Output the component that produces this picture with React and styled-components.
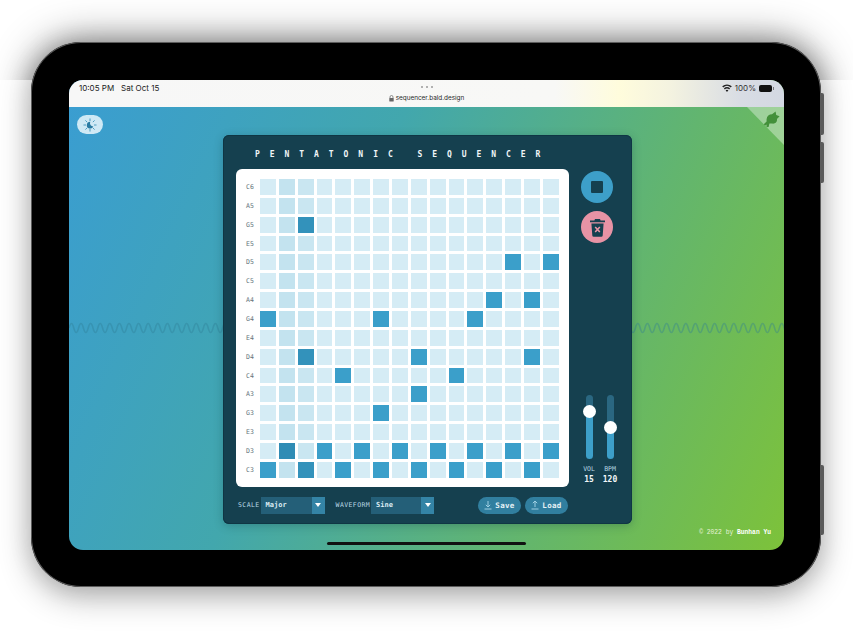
import React from "react";
import styled, { createGlobalStyle } from "styled-components";

const NOTES = ["C6", "A5", "G5", "E5", "D5", "C5", "A4", "G4", "E4", "D4", "C4", "A3", "G3", "E3", "D3", "C3"];

const ACTIVE = {
  G5: [2],
  D5: [13, 15],
  A4: [12, 14],
  G4: [0, 6, 11],
  D4: [2, 8, 14],
  C4: [4, 10],
  A3: [8],
  G3: [6],
  D3: [1, 3, 5, 7, 9, 11, 13, 15],
  C3: [0, 2, 4, 6, 8, 10, 12, 14],
};

const MONO = `"DejaVu Sans Mono", "Liberation Mono", monospace`;

const GlobalStyle = createGlobalStyle`
  html, body {
    margin: 0;
    padding: 0;
    background: #fff;
    overflow: hidden;
  }
`;

const Page = styled.div`
  width: 853px;
  height: 637px;
  padding: 42px 0 0 31px;
  box-sizing: border-box;
`;

const Device = styled.div`
  position: relative;
  width: 790px;
  height: 545px;
  box-sizing: border-box;
  padding: 38px 37px 37px 38px;
  background: #000;
  border-radius: 50px;
  box-shadow: inset 0 0 0 1px #5c5c5c, 0 10px 32px rgba(0, 0, 0, 0.3), 0 0 24px rgba(0, 0, 0, 0.12);

  &::before {
    content: "";
    position: absolute;
    inset: 0;
    border-radius: 50px;
    box-shadow: 0 -3px 40px rgba(0, 0, 0, 0.42);
    clip-path: inset(-60px -60px calc(100% - 38px) -60px);
    pointer-events: none;
  }
`;

const SideButton = styled.div`
  position: absolute;
  right: -3px;
  top: ${(p) => p.$top}px;
  width: 3px;
  height: ${(p) => p.$height}px;
  background: #5a5a5a;
  border-radius: 0 2px 2px 0;
`;

const Screen = styled.div`
  position: relative;
  height: 100%;
  display: flex;
  flex-direction: column;
  border-radius: 14px;
  overflow: hidden;
  background: linear-gradient(114deg, #3a9dd2 0%, #42a7ad 38%, #62b56f 70%, #7dc23a 100%);
`;

const StatusBar = styled.div`
  position: relative;
  flex: 0 0 27px;
  display: flex;
  align-items: flex-start;
  justify-content: space-between;
  box-sizing: border-box;
  padding: 1px 12px 0 10px;
  font: 400 8px/14px Inter, "Liberation Sans", sans-serif;
  color: #222;
  background: linear-gradient(90deg, #f7f7f7 0%, #f8f8f6 68%, #fffcdc 77%, #f4f3e0 84%, #d8dce4 94%, #d3d8e2 100%);
`;

const TimeText = styled.div`
  display: flex;
  gap: 7px;
`;

const AddressBar = styled.div`
  position: absolute;
  left: 0;
  right: 0;
  top: 6px;
  display: flex;
  flex-direction: column;
  align-items: center;
`;

const Dots = styled.div`
  display: flex;
  gap: 3px;
  height: 7px;

  i {
    width: 2px;
    height: 2px;
    border-radius: 50%;
    background: #9a9a9a;
  }
`;

const Url = styled.div`
  display: flex;
  align-items: center;
  gap: 2px;
  font-size: 6.4px;
  line-height: 10px;
  color: #2a2a2a;
`;

const StatusIcons = styled.div`
  display: flex;
  align-items: center;
  gap: 3px;
  color: #333;
`;

const Battery = styled.div`
  position: relative;
  width: 13px;
  height: 7px;
  border-radius: 2px;
  background: #111;

  &::after {
    content: "";
    position: absolute;
    left: 14px;
    top: 2px;
    width: 1px;
    height: 3px;
    background: #777;
  }
`;

const Main = styled.div`
  flex: 1;
  display: flex;
  justify-content: center;
  align-items: flex-start;
  padding: 28px 0 0 2px;
`;

const ThemeToggle = styled.button`
  position: absolute;
  left: 8px;
  top: 35px;
  width: 26px;
  height: 19px;
  padding: 0;
  display: flex;
  align-items: center;
  justify-content: center;
  border: 0;
  border-radius: 10px;
  background: #cfe9f5;
`;

const Corner = styled.a`
  position: absolute;
  right: 0;
  top: 27px;
  width: 37px;
  height: 38px;
  background: rgba(255, 255, 255, 0.36);
  clip-path: polygon(0 0, 100% 0, 100% 100%);
`;

const CornerCat = styled.svg`
  position: absolute;
  right: 3px;
  top: 3px;
`;

const WaveLine = styled.svg`
  position: absolute;
  left: 0;
  top: 242px;
`;

const Panel = styled.div`
  position: relative;
  width: 409px;
  height: 389px;
  box-sizing: border-box;
  padding: 0 7px 0 13px;
  background: #15404f;
  border-radius: 6px;
  box-shadow: inset 0 0 0 1px #0f3644, 0 2px 10px rgba(10, 50, 60, 0.28);
`;

const Title = styled.div`
  height: 34px;
  padding: 0 0 0 19px;
  font: 700 8px/39px ${MONO};
  letter-spacing: 9.95px;
  white-space: pre;
  color: #f1f6f8;
`;

const Body = styled.div`
  display: flex;
  height: 318px;
`;

const Board = styled.div`
  width: 333px;
  height: 318px;
  box-sizing: border-box;
  padding: 10px 10px 0 0;
  display: flex;
  background: #fff;
  border-radius: 6px;
`;

const Labels = styled.div`
  width: 24px;
  display: grid;
  grid-template-rows: repeat(16, 15.87px);
  row-gap: 3px;
`;

const NoteLabel = styled.div`
  padding-left: 10px;
  font: 400 6.5px/16px ${MONO};
  color: #66757c;
`;

const Grid = styled.div`
  display: grid;
  grid-template-columns: repeat(16, 15.87px);
  grid-template-rows: repeat(16, 15.87px);
  gap: 3px;
`;

const cellColor = ({ $on, $col }) => {
  if ($on) return $col === 1 ? "#2f8cb5" : $col === 2 ? "#3392bb" : "#3b9fca";
  return $col === 1 ? "#c3e3ef" : $col === 2 ? "#c9e6f1" : "#d5ecf5";
};

const Cell = styled.div`
  background: ${cellColor};
`;

const Side = styled.div`
  width: 56px;
  display: flex;
  flex-direction: column;
  align-items: center;
  padding-top: 2px;
  box-sizing: border-box;
`;

const RoundButton = styled.button`
  width: 32px;
  height: 32px;
  padding: 0;
  margin-bottom: 8px;
  display: flex;
  align-items: center;
  justify-content: center;
  border: 0;
  border-radius: 50%;
  background: ${(p) => p.$bg};
`;

const StopSquare = styled.div`
  width: 12px;
  height: 12px;
  background: #15404f;
  border-radius: 1px;
`;

const Sliders = styled.div`
  margin: auto 0 2px 5px;
  display: flex;
  gap: 6px;
`;

const SliderColumn = styled.div`
  width: 15px;
  display: flex;
  flex-direction: column;
  align-items: center;
`;

const Track = styled.div`
  position: relative;
  width: 7px;
  height: 64px;
  border-radius: 4px;
  background: linear-gradient(to top, #3d9fc9 var(--fill), #2a6781 var(--fill));
`;

const Thumb = styled.div`
  position: absolute;
  left: 50%;
  width: 13px;
  height: 13px;
  margin: 0 0 -6.5px -6.5px;
  border-radius: 50%;
  background: #fff;
`;

const SliderName = styled.div`
  margin-top: 6px;
  font: 400 6.5px/9px ${MONO};
  color: #b7d7e3;
`;

const SliderValue = styled.div`
  margin-top: 0;
  font: 700 8px/11px ${MONO};
  color: #f2f7f9;
`;

const Footer = styled.div`
  height: 37px;
  display: flex;
  align-items: center;
  box-sizing: border-box;
  padding: 0 0 1px 2px;
`;

const FieldLabel = styled.label`
  font: 400 6.5px/9px ${MONO};
  letter-spacing: 0.4px;
  color: #b7d7e3;
  margin-right: ${(p) => p.$gap}px;
  white-space: nowrap;
`;

const Select = styled.div`
  width: ${(p) => p.$width}px;
  height: 17px;
  display: flex;
  margin-right: ${(p) => p.$gap}px;
  background: #245f78;
  font: 700 7px/17px ${MONO};
  color: #dcedf4;
`;

const SelectText = styled.div`
  flex: 1;
  padding-left: 5px;
`;

const Caret = styled.div`
  width: 13px;
  display: flex;
  align-items: center;
  justify-content: center;
  background: #3484a6;

  &::after {
    content: "";
    border: 3px solid transparent;
    border-top: 4px solid #fff;
    border-bottom: 0;
  }
`;

const Pill = styled.button`
  width: 43px;
  height: 17px;
  margin-right: 4px;
  padding: 0;
  display: flex;
  align-items: center;
  justify-content: center;
  gap: 3px;
  border: 0;
  border-radius: 9px;
  background: #317f9f;
  font: 700 7.5px/17px ${MONO};
  letter-spacing: 0.3px;
  color: #e6f2f6;
`;

const Spacer = styled.div`
  flex: 1;
`;

const PanelEnd = styled.div`
  width: 53px;
`;

const Credit = styled.div`
  position: absolute;
  right: 13px;
  bottom: 13px;
  font: 400 6.3px/9px "Liberation Mono", monospace;
  color: #e6f3d8;

  b {
    color: #fff;
  }
`;

const HomeBar = styled.div`
  position: absolute;
  left: 258px;
  bottom: 5px;
  width: 199px;
  height: 3px;
  border-radius: 2px;
  background: #111;
`;

const wavePath = () => {
  let d = "M0 5";
  for (let x = 0; x < 720; x += 9.6) {
    d += ` q2.4 -9 4.8 0 t4.8 0`;
  }
  return d;
};

const SunMoonIcon = () => (
  <svg width="14" height="14" viewBox="0 0 24 24" fill="none" stroke="#3d93b9" strokeWidth="1.5" strokeLinecap="round">
    <path d="M12 1.5v3M12 19.5v3M1.5 12h3M19.5 12h3M4.6 4.6l2 2M17.4 17.4l2 2M4.6 19.4l2-2M19.4 4.6l-2 2" />
    <path d="M12.5 6.5a5.8 5.8 0 1 0 5.2 8 5.6 5.6 0 0 1-5.2-8z" fill="#2a7ba3" stroke="none" />
  </svg>
);

const CatIcon = () => (
  <CornerCat width="20" height="20" viewBox="0 0 20 20" fill="#43903a">
    <path d="M9 4.6 L11 4.2 L14.6 1.6 L15.2 5 L18.6 6.2 L16 9 C16.4 12 14 14.2 11 13.6 L8.4 13.4 L7.6 17 L5.4 17.2 L5.6 14.6 L2.6 17 L1.2 15.8 L5.6 11.6 C5.2 8.4 6.4 5.4 9 4.6 z" />
  </CornerCat>
);

const TrashIcon = () => (
  <svg width="17" height="19" viewBox="0 0 17 19">
    <path d="M6 1h5l.6 1.6H16v1.6H1V2.6h4.4z" fill="#15404f" />
    <path d="M2.4 5.4h12.2l-.9 12a1.4 1.4 0 0 1-1.4 1.3H4.7a1.4 1.4 0 0 1-1.4-1.3z" fill="#15404f" />
    <path d="M6.2 9l4.6 5M10.8 9l-4.6 5" stroke="#e793a5" strokeWidth="1.6" />
  </svg>
);

const ArrowIcon = ({ up }) => (
  <svg width="8" height="10" viewBox="0 0 8 10" fill="none" stroke="#9fd0e3" strokeWidth="1">
    <path d={up ? "M4 7V1M1.8 3.2L4 1l2.2 2.2" : "M4 1v6M1.8 4.8L4 7l2.2-2.2"} />
    <path d="M0.5 9h7" />
  </svg>
);

const LockIcon = () => (
  <svg width="5" height="7" viewBox="0 0 5 7">
    <path d="M1 3V2a1.5 1.5 0 0 1 3 0v1" fill="none" stroke="#666" strokeWidth="0.7" />
    <rect x="0.3" y="3" width="4.4" height="3.6" rx="0.6" fill="#666" />
  </svg>
);

const WifiIcon = () => (
  <svg width="10" height="8" viewBox="0 0 10 8" fill="#222">
    <path d="M5 8L3.6 6.3a2.2 2.2 0 0 1 2.8 0zM2.8 5.4L1.9 4.3a4.8 4.8 0 0 1 6.2 0l-.9 1.1a3.4 3.4 0 0 0-4.4 0zM1.2 3.4L.2 2.3a7.4 7.4 0 0 1 9.6 0l-1 1.1a6 6 0 0 0-7.6 0z" />
  </svg>
);

const Slider = ({ name, value, percent }) => (
  <SliderColumn>
    <Track style={{ "--fill": `${percent}%` }}>
      <Thumb style={{ bottom: `${percent}%` }} />
    </Track>
    <SliderName>{name}</SliderName>
    <SliderValue>{value}</SliderValue>
  </SliderColumn>
);

const App = () => {
  return (
    <Page>
      <GlobalStyle />
      <Device>
        <SideButton $top={51} $height={42} />
        <SideButton $top={100} $height={41} />
        <SideButton $top={423} $height={70} />
        <Screen>
          <StatusBar>
            <TimeText>
              <span>10:05 PM</span>
              <span>Sat Oct 15</span>
            </TimeText>
            <AddressBar>
              <Dots>
                <i />
                <i />
                <i />
              </Dots>
              <Url>
                <LockIcon />
                sequencer.bald.design
              </Url>
            </AddressBar>
            <StatusIcons>
              <WifiIcon />
              <span>100%</span>
              <Battery />
            </StatusIcons>
          </StatusBar>

          <WaveLine width="715" height="12" viewBox="0 0 715 10" fill="none">
            <path d={wavePath()} stroke="#2f7f95" strokeOpacity="0.38" strokeWidth="1.6" />
          </WaveLine>

          <ThemeToggle>
            <SunMoonIcon />
          </ThemeToggle>
          <Corner>
            <CatIcon />
          </Corner>

          <Main>
            <Panel>
              <Title>PENTATONIC SEQUENCER</Title>
              <Body>
                <Board>
                  <Labels>
                    {NOTES.map((note) => (
                      <NoteLabel key={note}>{note}</NoteLabel>
                    ))}
                  </Labels>
                  <Grid>
                    {NOTES.map((note) =>
                      Array.from({ length: 16 }, (_, col) => (
                        <Cell key={note + col} $col={col} $on={(ACTIVE[note] || []).includes(col)} />
                      ))
                    )}
                  </Grid>
                </Board>
                <Side>
                  <RoundButton $bg="#3d9fc9">
                    <StopSquare />
                  </RoundButton>
                  <RoundButton $bg="#e793a5">
                    <TrashIcon />
                  </RoundButton>
                  <Sliders>
                    <Slider name="VOL" value="15" percent={75} />
                    <Slider name="BPM" value="120" percent={50} />
                  </Sliders>
                </Side>
              </Body>
              <Footer>
                <FieldLabel $gap={1}>SCALE</FieldLabel>
                <Select $width={64} $gap={11}>
                  <SelectText>Major</SelectText>
                  <Caret />
                </Select>
                <FieldLabel $gap={1}>WAVEFORM</FieldLabel>
                <Select $width={63} $gap={0}>
                  <SelectText>Sine</SelectText>
                  <Caret />
                </Select>
                <Spacer />
                <Pill>
                  <ArrowIcon />
                  Save
                </Pill>
                <Pill>
                  <ArrowIcon up />
                  Load
                </Pill>
                <PanelEnd />
              </Footer>
            </Panel>
          </Main>

          <Credit>
            © 2022 by <b>Bunhan Yu</b>
          </Credit>
          <HomeBar />
        </Screen>
      </Device>
    </Page>
  );
};

export default App;
